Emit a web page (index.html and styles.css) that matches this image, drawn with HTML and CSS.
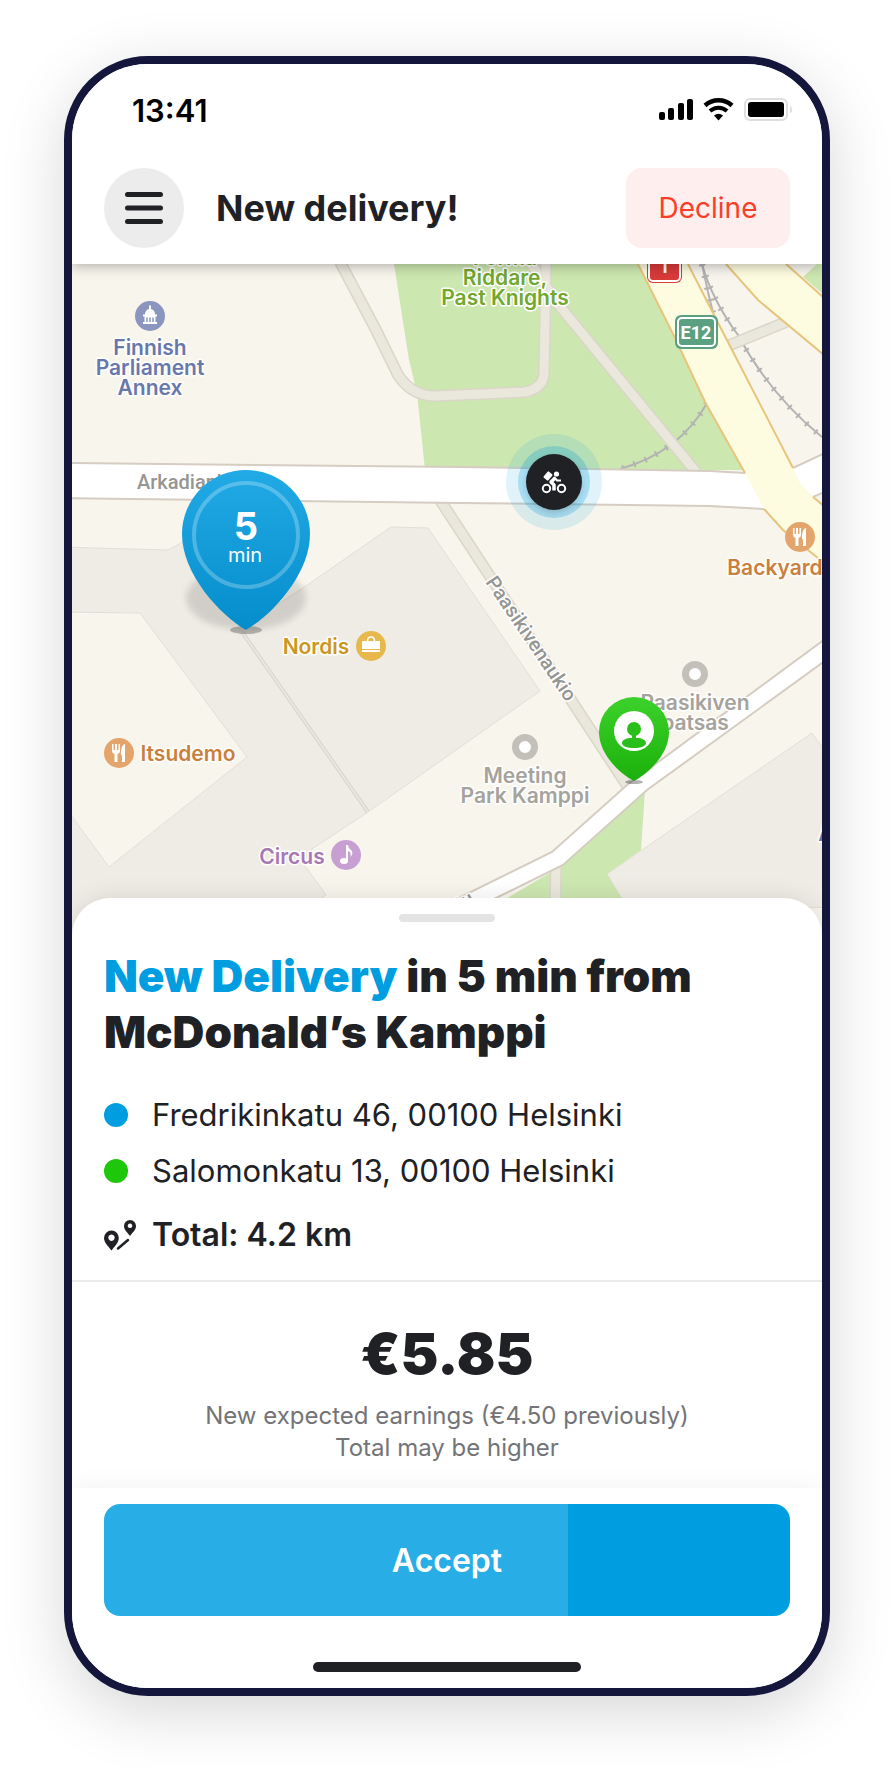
FILE: index.html
```html
<!DOCTYPE html>
<html lang="en">
<head>
    <meta charset="UTF-8">
    <meta name="viewport" content="width=device-width, initial-scale=1.0">
    <title>New delivery</title>
    <link rel="stylesheet" href="styles.css">
</head>
<body>
    <main class="phone">
        <header class="header">
            <div class="status">
                <span class="time">13:41</span>
                <svg class="status-icons" width="134" height="24" viewBox="0 0 134 24" aria-hidden="true">
                    <rect x="0" y="14" width="6" height="8" rx="2"/>
                    <rect x="9" y="10" width="6" height="12" rx="2"/>
                    <rect x="19" y="5" width="6" height="17" rx="2"/>
                    <rect x="28" y="1" width="6" height="21" rx="2"/>
                    <path d="M46 7.500a20 20 0 0 1 27 0" fill="none" stroke="#000" stroke-width="4.500"/>
                    <path d="M51 13a12.500 12.500 0 0 1 17 0" fill="none" stroke="#000" stroke-width="4"/>
                    <path d="M55 17.500a7 7 0 0 1 9 0L59.500 22.500z"/>
                    <rect x="86" y="1" width="42" height="21" rx="5" fill="none" stroke="#dedede" stroke-width="2"/>
                    <rect x="89" y="4" width="36" height="15" rx="3"/>
                    <path d="M131 8c3 1 3 6 0 7z" fill="#dedede"/>
                </svg>
            </div>
            <div class="topbar">
                <button class="menu" type="button" aria-label="Menu">
                    <svg width="40" height="32" viewBox="0 0 40 32">
                        <path d="M3.500 2.500h33M3.500 16h33M3.500 29.500h33" stroke="#202125" stroke-width="5" stroke-linecap="round"/>
                    </svg>
                </button>
                <h1 class="title">New delivery!</h1>
                <button class="decline" type="button">Decline</button>
            </div>
        </header>

        <svg class="map" viewBox="72 264 750 676" role="img" aria-label="Map">
            <defs>
                <linearGradient id="blue" x1="0" y1="0" x2="0" y2="1">
                    <stop offset="0" stop-color="#22aae6"/>
                    <stop offset="1" stop-color="#048dcb"/>
                </linearGradient>
                <linearGradient id="green" x1="0" y1="0" x2="0" y2="1">
                    <stop offset="0" stop-color="#3dd12b"/>
                    <stop offset="1" stop-color="#1cb00c"/>
                </linearGradient>
                <filter id="soft" x="-20%" y="-20%" width="140%" height="140%">
                    <feGaussianBlur stdDeviation="3"/>
                </filter>
                <g id="food">
                    <circle r="15" fill="#e3a56b"/>
                    <path d="M-7 -9h1.500v6h1.500v-6h2v6h1.500v-6H1v7q0 2.500-2.500 3V9h-3V1Q-7 .500-7-2zM6-9V9H3V3Q1.500 2 2-2Q2.500-8 6-9z" fill="#fff"/>
                </g>
            </defs>

            <rect x="72" y="264" width="750" height="676" fill="#f8f5ed"/>

            <!-- buildings -->
            <g class="building">
                <path d="M60 547L168 550L210 528L258 617L300 590L391 527L428 528L540 691L368 812L312 849L303 863L326 895L310 905V950H60z"/>
                <path d="M607 874L812 733L840 772V907L630 912z"/>
            </g>
            <path class="yard" d="M60 612L140 613L247 757L109 867L60 800z"/>
            <path d="M242 632L368 812" stroke="#d9d7d0" stroke-width="4"/>
            <path d="M242 632L368 812" stroke="#ece9e2" stroke-width="1.500"/>

            <!-- parks -->
            <g fill="#cde7b0">
                <path d="M394 264L409 360L417 393L425 470H750L638 264z"/>
                <path d="M645 790L641 850L607 874L635 920H470L563 865z"/>
                <path d="M803 277L817 264H822V293z"/>
            </g>

            <!-- railways -->
            <g class="rail">
                <path d="M702 264Q712 300 738 335Q770 395 822 437"/>
                <path d="M702 264L708 292L713 313"/>
                <path d="M707 403Q680 452 620 469"/>
            </g>
            <g class="ties">
                <path d="M702 264Q712 300 738 335Q770 395 822 437"/>
                <path d="M702 264L708 292L713 313"/>
                <path d="M707 403Q680 452 620 469"/>
            </g>

            <!-- footpaths -->
            <g class="path-edge">
                <path d="M340 262L376 330L398 375Q412 396 435 396L525 392Q543 388 544 374L546 262"/>
                <path d="M530 262L558 304L696 472"/>
                <path d="M440 500L628 787"/>
                <path d="M730 345L786 322"/>
                <path d="M556 865L555 920"/>
            </g>
            <g class="path-fill">
                <path d="M340 262L376 330L398 375Q412 396 435 396L525 392Q543 388 544 374L546 262"/>
                <path d="M530 262L558 304L696 472"/>
                <path d="M440 500L628 787"/>
                <path d="M730 345L786 322"/>
                <path d="M556 865L555 920"/>
            </g>

            <!-- streets -->
            <g class="street">
                <path d="M60 463L460 467L590 469L710 471L745 473L793 468L840 446V485L813 497L764 509L710 506L460 503L60 498z"/>
                <path d="M840 628L627 785L552 852L430 912V930L498 897L563 865L647 790L840 650z"/>
            </g>

            <!-- highway -->
            <path d="M638 264L675 338L705 402L745 473L764 509L783 530L830 568V510L813 497L800 483L793 468L713 313L688 264z" fill="#fdfce0"/>
            <path d="M726 264L758 300L822 354V296L786 264z" fill="#fdfce0"/>
            <g fill="none" stroke="#e8c57c" stroke-width="2">
                <path d="M638 264L675 338L705 402L745 473"/>
                <path d="M764 509L783 530L818 558"/>
                <path d="M688 264L713 313L793 468"/>
                <path d="M813 497L824 506"/>
                <path d="M726 264L758 300L824 355"/>
                <path d="M786 264L824 298"/>
            </g>

            <!-- road signs -->
            <rect x="647" y="248" width="35" height="35" rx="6" fill="#d93a3a"/>
            <rect x="649" y="250" width="31" height="31" rx="4" fill="none" stroke="#fff" stroke-width="2"/>
            <text class="sign" x="665" y="273">T</text>
            <rect x="675" y="315" width="43" height="34" rx="6" fill="#5aa181"/>
            <rect x="678" y="318" width="37" height="28" rx="4" fill="none" stroke="#fff" stroke-width="2"/>
            <text class="sign" x="696" y="339">E12</text>

            <!-- street names -->
            <text class="street-name" x="137" y="489">Arkadiankatu</text>
            <text class="street-name" transform="translate(485 582) rotate(56)">Paasikivenaukio</text>
            <text class="street-name" transform="translate(441 921) rotate(-28)">katu</text>

            <!-- places -->
            <g class="place park">
                <text x="505" y="265">Forma</text>
                <text x="505" y="285">Riddare,</text>
                <text x="505" y="305">Past Knights</text>
            </g>
            <g class="place civic">
                <text x="150" y="355">Finnish</text>
                <text x="150" y="375">Parliament</text>
                <text x="150" y="395">Annex</text>
                <text x="826" y="841">A</text>
            </g>
            <g transform="translate(150 316)">
                <circle r="15" fill="#8b96be"/>
                <path d="M-1-10.500h2V-7Q5-6 5-1.500H7V.500H5.500V6H7V8H-7V6H-5.500V.500H-7V-1.500H-5Q-5-6-1-7z" fill="#fff"/>
                <path d="M-3 1.500V6M0 1.500V6M3 1.500V6" stroke="#8b96be" stroke-width="1.500"/>
            </g>
            <g class="place food">
                <text x="775" y="575">Backyard</text>
                <text x="188" y="761">Itsudemo</text>
            </g>
            <use href="#food" x="800" y="537"/>
            <use href="#food" x="119" y="753"/>
            <g class="place shop">
                <text x="316" y="654">Nordis</text>
            </g>
            <g transform="translate(371 646)">
                <circle r="15" fill="#e7b84c"/>
                <path d="M-9-5H9V3H-9zM-9 4H9V6H-9z" fill="#fff"/>
                <path d="M-3.500-5q0-4 3.500-4t3.500 4" fill="none" stroke="#fff" stroke-width="1.500"/>
            </g>
            <g class="place music">
                <text x="292" y="864">Circus</text>
            </g>
            <g transform="translate(346 855)">
                <circle r="15" fill="#c79fd3"/>
                <ellipse cx="-2" cy="6" rx="4" ry="3" fill="#fff"/>
                <path d="M0-10h2q0 3 3 5q3 3-.500 7q1-5-2.500-6V6H0z" fill="#fff"/>
            </g>
            <g class="place spot">
                <circle cx="695" cy="674" r="9.500"/>
                <text x="695" y="710">Paasikiven</text>
                <text x="695" y="730">patsas</text>
                <circle cx="525" cy="747" r="9.500"/>
                <text x="525" y="783">Meeting</text>
                <text x="525" y="803">Park Kamppi</text>
            </g>

            <!-- courier -->
            <g transform="translate(554 482)">
                <circle r="48" fill="#009de0" opacity=".12"/>
                <circle r="36" fill="#009de0" opacity=".25"/>
                <circle cy="2" r="27" opacity=".2" filter="url(#soft)"/>
                <circle r="28" fill="#202125"/>
                <g fill="none" stroke="#fff" stroke-width="2">
                    <circle cx="-7.500" cy="6.500" r="3.700"/>
                    <circle cx="7.500" cy="6.500" r="3.700"/>
                    <path d="M1-4L-3 0L0 3V8.500" stroke-width="3.500" stroke-linejoin="round"/>
                    <path d="M0-5L3-1.500H7" stroke-width="2"/>
                </g>
                <circle cx="2.500" cy="-8" r="2.600" fill="#fff"/>
                <rect x="-4" y="-3" width="8" height="6" rx="1" transform="translate(-6 -6) rotate(-50)" fill="#fff"/>
            </g>

            <!-- restaurant pin -->
            <ellipse cx="246" cy="598" rx="60" ry="32" opacity=".12" filter="url(#soft)"/>
            <ellipse cx="246" cy="630" rx="16" ry="4" opacity=".25"/>
            <path d="M246 470A64 64 0 0 1 310 534C310 574 272 615 246 630C220 615 182 574 182 534A64 64 0 0 1 246 470z" fill="url(#blue)"/>
            <circle cx="246" cy="535" r="52" fill="none" stroke="#fff" stroke-width="4" opacity=".25"/>
            <text class="eta" x="246" y="540">5</text>
            <text class="eta-unit" x="245" y="562">min</text>

            <!-- customer pin -->
            <ellipse cx="634" cy="782" rx="9" ry="2" opacity=".3"/>
            <path d="M634 697A35 35 0 0 1 669 732C669 754 649 773 634 781C619 773 599 754 599 732A35 35 0 0 1 634 697z" fill="url(#green)"/>
            <circle cx="634" cy="731" r="20" fill="#fff"/>
            <g fill="#29bf1a">
                <circle cx="634" cy="729" r="7"/>
                <path d="M632 734h4v4c6 0 10 2 10 5s-5 5-12 5s-12-2-12-5s4-5 10-5z"/>
            </g>
        </svg>

        <section class="sheet">
            <div class="handle"></div>
            <h2 class="heading"><span class="accent">New Delivery</span> in 5 min from McDonald’s Kamppi</h2>
            <ul class="route">
                <li><span class="dot pickup"></span>Fredrikinkatu 46, 00100 Helsinki</li>
                <li><span class="dot dropoff"></span>Salomonkatu 13, 00100 Helsinki</li>
                <li class="total">
                    <svg width="32" height="32" viewBox="0 0 32 32" aria-hidden="true">
                        <path fill="#202125" fill-rule="evenodd" d="M7.500 11.500A7.300 7.300 0 0 1 14.800 19C14.800 24 10 28 7.500 31.500C5 28 0 24 0 19A7.500 7.500 0 0 1 7.500 11.500zM7.500 15.500a3.200 3.200 0 1 0 .010 0zM26 1A6 6 0 0 1 32 7C32 11 28.500 13.500 26 17C23.500 13.500 20 11 20 7A6 6 0 0 1 26 1zM26 4.500a2.300 2.300 0 1 0 .010 0z"/>
                        <path d="M14 29.500L24 21" stroke="#202125" stroke-width="2.500" stroke-linecap="round"/>
                    </svg>
                    Total: 4.2 km
                </li>
            </ul>
            <div class="earnings">
                <strong class="price">€5.85</strong>
                <p class="note">New expected earnings (€4.50 previously)<br>Total may be higher</p>
            </div>
        </section>

        <footer class="footer">
            <button class="accept" type="button" style="--progress: 67.6%">Accept</button>
            <div class="home-bar"></div>
        </footer>
    </main>
</body>
</html>
```

FILE: styles.css
```css
* {
    box-sizing: border-box;
}
body {
    margin: 0;
    padding: 56px 64px 72px;
    background: #fff;
    color: #202125;
    font-family: Inter, sans-serif;
}
.phone {
    border: 8px solid #15163b;
    border-radius: 84px;
    overflow: hidden;
    background: #fff;
    box-shadow: 0 16px 64px rgba(0, 0, 0, 0.16);
}
button {
    border: none;
    padding: 0;
    font-family: inherit;
    cursor: pointer;
}

/* header */
.header {
    position: relative;
    background: #fff;
    box-shadow: 0 2px 12px rgba(0, 0, 0, 0.3);
}
.status {
    display: flex;
    justify-content: space-between;
    align-items: center;
    height: 92px;
    margin-bottom: 12px;
    padding: 0 29px 0 60px;
    color: #000;
}
.time {
    font-size: 31px;
    font-weight: 600;
}
.topbar {
    display: flex;
    align-items: center;
    gap: 32px;
    padding: 0 32px 16px;
}
.menu {
    display: flex;
    align-items: center;
    justify-content: center;
    width: 80px;
    height: 80px;
    border-radius: 50%;
    background: #ececec;
}
.title {
    flex: 1;
    margin: 0;
    font-size: 36px;
    font-weight: 700;
}
.decline {
    width: 164px;
    height: 80px;
    border-radius: 16px;
    background: #ffeeee;
    color: #fa3e28;
    font-size: 28px;
}

/* map */
.map {
    display: block;
    width: 100%;
    height: auto;
}
.building path,
.yard {
    fill: #efece5;
    stroke: #e2dfd8;
    stroke-width: 1;
}
.yard {
    fill: #f8f5ed;
}
.rail path,
.ties path {
    fill: none;
    stroke: #b3b3b3;
    stroke-width: 2;
}
.ties path {
    stroke-width: 6;
    stroke-dasharray: 2 10;
}
.path-edge path {
    fill: none;
    stroke: #dad6c8;
    stroke-width: 12;
}
.path-fill path {
    fill: none;
    stroke: #eae8dc;
    stroke-width: 9;
}
.street path {
    fill: #fff;
    stroke: #d5cdc1;
    stroke-width: 2;
}
.map text {
    font-size: 20px;
}
.map .sign {
    fill: #fff;
    font-family: Roboto, sans-serif;
    font-size: 18px;
    font-weight: 700;
    text-anchor: middle;
}
.street-name {
    fill: #959592;
    stroke: #fff;
    stroke-width: 3;
    paint-order: stroke;
    font-family: Roboto, sans-serif;
    font-weight: 500;
}
.map .place text {
    stroke: #fff;
    stroke-width: 3;
    stroke-linejoin: round;
    paint-order: stroke;
    text-anchor: middle;
    font-size: 21px;
    font-weight: 600;
}
.park { fill: #71a82f; }
.civic { fill: #6878ac; }
.food { fill: #ca7f3c; }
.shop { fill: #cb981f; }
.music { fill: #a878b5; }
.spot { fill: #a5a39c; }
.spot circle {
    fill: #fff;
    stroke: #c3c0ba;
    stroke-width: 7;
}
.map .eta {
    fill: #fff;
    font-size: 38px;
    font-weight: 700;
    text-anchor: middle;
}
.eta-unit {
    fill: #fff;
    text-anchor: middle;
}

/* bottom sheet */
.sheet {
    position: relative;
    margin-top: -42px;
    padding-top: 16px;
    border-radius: 38px 38px 0 0;
    background: #fff;
    box-shadow: 0 0 24px rgba(0, 0, 0, 0.1);
}
.handle {
    width: 96px;
    height: 8px;
    margin: 0 auto 26px;
    border-radius: 4px;
    background: #e4e4e4;
}
.heading {
    margin: 0;
    padding: 0 32px;
    font-size: 44px;
    font-weight: 900;
    line-height: 56px;
}
.accent {
    color: #009de0;
}
.route {
    display: flex;
    flex-direction: column;
    gap: 16px;
    margin: 0;
    padding: 35px 32px 25px;
    border-bottom: 2px solid #ebebeb;
    list-style: none;
    font-size: 31px;
    line-height: 40px;
}
.route li {
    display: flex;
    align-items: center;
    gap: 24px;
}
.route .total {
    gap: 16px;
    margin-top: 8px;
    font-size: 32px;
    font-weight: 600;
}
.dot {
    width: 24px;
    height: 24px;
    border-radius: 50%;
}
.pickup { background: #009de0; }
.dropoff { background: #1fc70a; }
.earnings {
    padding: 40px 32px 24px;
    text-align: center;
}
.price {
    display: block;
    font-size: 57px;
    font-weight: 900;
    line-height: 64px;
}
.note {
    margin: 14px 0 0;
    color: #737478;
    font-size: 24px;
    line-height: 32px;
}

/* footer */
.footer {
    position: relative;
    padding: 16px 32px;
    background: #fff;
    box-shadow: 0 0 24px rgba(0, 0, 0, 0.06);
}
.accept {
    display: block;
    width: 100%;
    height: 112px;
    border-radius: 16px;
    background: linear-gradient(to right, #29ade6 var(--progress), #009de0 var(--progress));
    color: #fff;
    font-size: 32px;
    font-weight: 600;
}
.home-bar {
    width: 268px;
    height: 10px;
    margin: 46px auto 0;
    border-radius: 5px;
    background: #202125;
}
```
